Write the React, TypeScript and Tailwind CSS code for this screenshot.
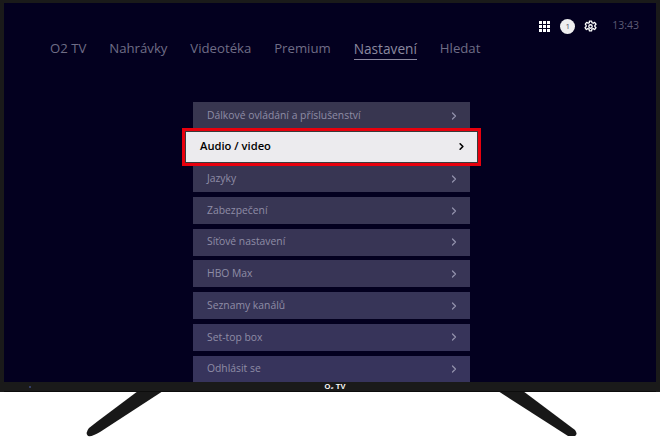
import { LuChevronRight } from "react-icons/lu";

const navItems = ["O2 TV", "Nahrávky", "Videotéka", "Premium", "Nastavení", "Hledat"];

const rows = [
  { label: "Dálkové ovládání a příslušenství", bg: "bg-[#383650]" },
  { label: "Audio / video", bg: "" },
  { label: "Jazyky", bg: "bg-[#383653]" },
  { label: "Zabezpečení", bg: "bg-[#383654]" },
  { label: "Síťové nastavení", bg: "bg-[#383555]" },
  { label: "HBO Max", bg: "bg-[#383556]" },
  { label: "Seznamy kanálů", bg: "bg-[#373558]" },
  { label: "Set-top box", bg: "bg-[#37345a]" },
  { label: "Odhlásit se", bg: "bg-[#37345c]" },
];

const Row = ({ label, bg }: { label: string; bg: string }) => {
  if (label === "Audio / video") {
    return (
      <div className="relative z-10 -mx-[11px] -my-[5.5px] h-[38px] shrink-0 border-[3px] border-[#e8000d] bg-[#3a3a3a] p-px">
        <div className="flex h-full items-center justify-between bg-[#ecebee] pb-[1px] pl-[14px] pr-[10px] text-[11.2px] font-semibold text-black">
          <span>{label}</span>
          <LuChevronRight className="size-[11px] stroke-[3.5px] text-black" />
        </div>
      </div>
    );
  }
  return (
    <div
      className={`flex h-[27px] shrink-0 items-center justify-between pl-[14px] pr-[10px] text-[10.35px] text-[#8f8da6] ${bg}`}
    >
      <span>{label}</span>
      <LuChevronRight className="size-[12px] stroke-[2.5px] text-[#9290ab]" />
    </div>
  );
};

const App = () => {
  return (
    <div className="relative h-[437px] w-[660px] overflow-hidden bg-white font-['Open_Sans',sans-serif]">
      {/* TV body */}
      <div className="relative z-10 flex h-[392px] w-[660px] flex-col bg-[#1a1a1a] px-[4px] pt-[3px]">
        <div className="flex h-[379px] shrink-0 flex-col overflow-hidden bg-[#03001f]">
          {/* status bar */}
          <div className="flex h-[36px] shrink-0 items-center justify-end pr-[17px] pt-[10px]">
            <svg viewBox="0 0 11 11" className="size-[11px] text-white" fill="currentColor">
              <rect x="0" y="0" width="3" height="3" />
              <rect x="4" y="0" width="3" height="3" />
              <rect x="8" y="0" width="3" height="3" />
              <rect x="0" y="4" width="3" height="3" />
              <rect x="4" y="4" width="3" height="3" />
              <rect x="8" y="4" width="3" height="3" />
              <rect x="0" y="8" width="3" height="3" />
              <rect x="4" y="8" width="3" height="3" />
              <rect x="8" y="8" width="3" height="3" />
            </svg>
            <div className="ml-[10px] flex size-[15px] items-center justify-center rounded-full bg-[#efeef0] text-[8px] text-[#55536a]">
              1
            </div>
            <svg
              viewBox="0 0 24 24"
              className="ml-[9px] size-[13px]"
              fill="none"
              stroke="white"
              strokeWidth="2.4"
              strokeLinejoin="round"
            >
              <circle cx="12" cy="12" r="3.2" />
              <path d="M10 2h4l.6 3 2.4 1 2.6-1.6 2.6 3.4-2.2 2.2v2l2.2 2.2-2.6 3.4-2.6-1.6-2.4 1-.6 3h-4l-.6-3-2.4-1-2.6 1.6-2.6-3.4 2.2-2.2v-2L2.4 7.8 5 4.4l2.6 1.6 2.4-1z" />
            </svg>
            <span className="ml-[15px] text-[10.5px] text-[#5d5b75]">13:43</span>
          </div>

          {/* main nav */}
          <div className="flex h-[26px] shrink-0 items-start gap-[22.9px] pl-[46px] text-[13.2px] leading-[19px] text-[#6f6d86]">
            {navItems.map((item) =>
              item === "Nastavení" ? (
                <span key={item} className="border-b border-[#8b899f] pb-[1px] text-[13.7px] font-medium text-[#8b899f]">
                  {item}
                </span>
              ) : (
                <span key={item}>{item}</span>
              ),
            )}
          </div>

          {/* settings list */}
          <div className="ml-[189px] mr-[186px] mt-[37px] flex flex-col gap-[4.7px]">
            {rows.map((row) => (
              <Row key={row.label} label={row.label} bg={row.bg} />
            ))}
          </div>
        </div>

        {/* bottom bezel */}
        <div className="relative flex h-[10px] shrink-0 items-center justify-center border-b border-[#0c0c0c]">
          <span className="absolute left-[25px] top-[4px] size-[2px] rounded-full bg-[#3c4a80]" />
          <span className="ml-[10px] font-['Liberation_Sans',sans-serif] text-[7.5px] font-bold leading-none text-white">
            O₂ TV
          </span>
        </div>
      </div>

      {/* stand legs */}
      <svg viewBox="0 0 660 437" className="absolute left-0 top-0 size-full" fill="#181818">
        <path d="M138 391 L163 391 L100 432 Q92 437 88 436 Q85 433 89 428 L98 421 Z" />
        <path d="M498 391 L523 391 L575 430 Q578 434 575 436 L568 436 Z" />
      </svg>
    </div>
  );
};

export default App;
